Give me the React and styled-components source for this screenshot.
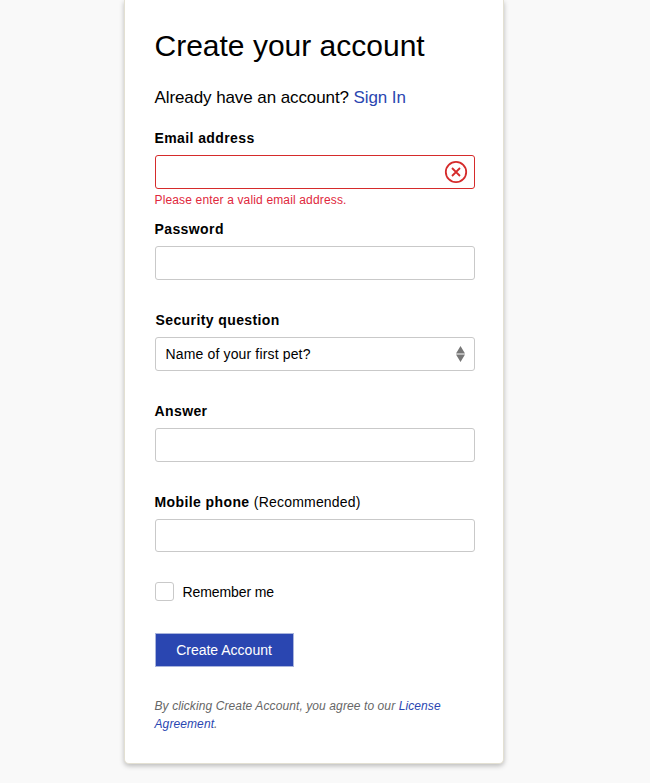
import React from 'react';
import styled, { createGlobalStyle } from 'styled-components';

const GlobalStyle = createGlobalStyle`
    html, body {
        margin: 0;
        padding: 0;
        background: #f9f9f9;
        font-family: "Liberation Sans", Arial, sans-serif;
        color: #000;
    }
`;

const Page = styled.div`
    display: flex;
    justify-content: center;
    width: 650px;
    height: 783px;
    overflow: hidden;
    padding-right: 23px;
    box-sizing: border-box;
`;

const Card = styled.main`
    width: 380px;
    height: 764px;
    box-sizing: border-box;
    padding: 29px 29px 0 30px;
    background: #fff;
    border: 1px solid #e3e0d2;
    border-top: 0;
    border-radius: 0 0 5px 5px;
    box-shadow: 0 2px 5px rgba(0, 0, 0, 0.25);
`;

const Title = styled.h1`
    margin: 0;
    font-size: 30px;
    line-height: 34px;
    font-weight: 400;
`;

const Intro = styled.p`
    margin: 25px 0 0;
    font-size: 17px;
    line-height: 20px;
    letter-spacing: -0.09px;
`;

const Link = styled.a`
    color: #2a46b1;
    text-decoration: none;
`;

const Form = styled.form`
    margin-top: 21px;
`;

const Field = styled.div`
    display: flex;
    flex-direction: column;
`;

const Label = styled.label`
    height: 18px;
    margin-bottom: 8px;
    font-size: 14px;
    line-height: 18px;
    font-weight: 700;
    letter-spacing: 0.4px;
    padding-left: ${props => props.$indent || 0}px;
`;

const LabelNote = styled.span`
    font-weight: 400;
    letter-spacing: 0.2px;
`;

const InputWrap = styled.div`
    position: relative;
    width: 320px;
`;

const Input = styled.input`
    display: block;
    width: 100%;
    height: ${props => props.$height || 34}px;
    box-sizing: border-box;
    padding: 0 40px 0 10px;
    background: #fff;
    border: 1px solid ${props => (props.$invalid ? '#d52b2b' : '#c9c9c9')};
    border-radius: 3px;
    outline: none;
`;

const Select = styled.select`
    display: block;
    width: 100%;
    height: 34px;
    box-sizing: border-box;
    padding: 0 30px 0 10px;
    appearance: none;
    background: #fff;
    border: 1px solid #c9c9c9;
    border-radius: 3px;
    font-family: inherit;
    font-size: 14px;
    letter-spacing: 0.15px;
    color: #000;
`;

const IconSlot = styled.span`
    position: absolute;
    top: 50%;
    right: ${props => props.$right}px;
    display: flex;
    transform: translateY(-50%);
    pointer-events: none;
`;

const Hint = styled.div`
    height: 31px;
    box-sizing: border-box;
    padding-top: 4px;
    font-size: 12px;
    line-height: 14px;
    letter-spacing: 0.15px;
    color: #e0283c;
`;

const CheckRow = styled.label`
    display: flex;
    align-items: center;
    gap: 9px;
    height: 20px;
    margin-top: -2px;
    font-size: 14px;
    letter-spacing: -0.1px;
`;

const CheckBox = styled.input`
    appearance: none;
    width: 19px;
    height: 19px;
    margin: 0;
    background: #fff;
    border: 1px solid #c9c9c9;
    border-radius: 3px;
`;

const CheckText = styled.span`
    padding-top: 2px;
`;

const SubmitButton = styled.button`
    display: block;
    width: 139px;
    height: 34px;
    margin-top: 32px;
    padding: 0;
    background: #2a46b1;
    border: 1px solid #a9b4dc;
    color: #fff;
    font-family: inherit;
    font-size: 14px;
`;

const Terms = styled.p`
    width: 320px;
    margin: 30px 0 0;
    font-size: 12px;
    line-height: 18px;
    font-style: italic;
    letter-spacing: 0.1px;
    color: #666;
`;

function ErrorIcon() {
    return (
        <svg width="24" height="24" viewBox="0 0 24 24" fill="none" stroke="#d52b2b">
            <circle cx="12" cy="12" r="10.2" strokeWidth="1.8" />
            <path d="M8 8l8 8M16 8l-8 8" strokeWidth="1.8" />
        </svg>
    );
}

function SortIcon() {
    return (
        <svg width="9" height="16" viewBox="0 0 9 16" fill="#777">
            <path d="M4.5 0L9 7.4H0zM4.5 16L0 8.6h9z" />
        </svg>
    );
}

export default function App() {
    return (
        <Page>
            <GlobalStyle />
            <Card>
                <Title>Create your account</Title>
                <Intro>Already have an account? <Link href="#">Sign In</Link></Intro>
                <Form onSubmit={e => e.preventDefault()}>
                    <Field>
                        <Label>Email address</Label>
                        <InputWrap>
                            <Input $invalid />
                            <IconSlot $right={7}><ErrorIcon /></IconSlot>
                        </InputWrap>
                        <Hint>Please enter a valid email address.</Hint>
                    </Field>
                    <Field>
                        <Label>Password</Label>
                        <InputWrap><Input type="password" /></InputWrap>
                        <Hint />
                    </Field>
                    <Field>
                        <Label $indent={1}>Security question</Label>
                        <InputWrap>
                            <Select defaultValue="pet">
                                <option value="pet">Name of your first pet?</option>
                            </Select>
                            <IconSlot $right={10}><SortIcon /></IconSlot>
                        </InputWrap>
                        <Hint />
                    </Field>
                    <Field>
                        <Label>Answer</Label>
                        <InputWrap><Input /></InputWrap>
                        <Hint />
                    </Field>
                    <Field>
                        <Label>Mobile phone <LabelNote>(Recommended)</LabelNote></Label>
                        <InputWrap><Input $height={33} /></InputWrap>
                        <Hint />
                    </Field>
                    <CheckRow>
                        <CheckBox type="checkbox" />
                        <CheckText>Remember me</CheckText>
                    </CheckRow>
                    <SubmitButton type="submit">Create Account</SubmitButton>
                </Form>
                <Terms>
                    By clicking Create Account, you agree to our <Link href="#">License Agreement</Link>.
                </Terms>
            </Card>
        </Page>
    );
}
